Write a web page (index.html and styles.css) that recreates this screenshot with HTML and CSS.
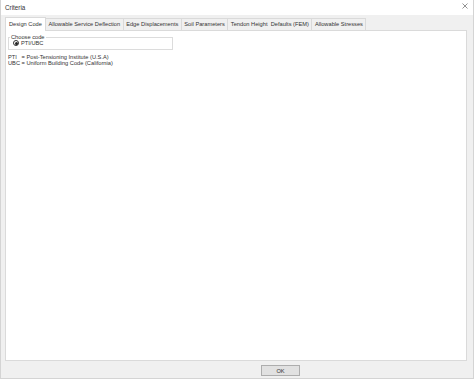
FILE: index.html
```html
<!DOCTYPE html>
<html>
<head>
<meta charset="utf-8">
<link rel="stylesheet" href="styles.css">
</head>
<body>
<div class="window">
  <div class="titlebar">
    <span class="title">Criteria</span>
    <svg class="close" width="6" height="6" viewBox="0 0 6 6"><path d="M0.5 0.5L5.5 5.5M5.5 0.5L0.5 5.5" stroke="#777" stroke-width="0.8"/></svg>
  </div>
  <div class="body">
    <div class="tabs">
      <div class="tab active">Design Code</div>
      <div class="tab">Allowable Service Deflection</div>
      <div class="tab">Edge Displacements</div>
      <div class="tab">Soil Parameters</div>
      <div class="tab">Tendon Height&nbsp; Defaults (FEM)</div>
      <div class="tab">Allowable Stresses</div>
    </div>
    <div class="panel">
      <fieldset class="group">
        <legend>Choose code</legend>
        <label class="radio"><span class="dot"></span>PTI/UBC</label>
      </fieldset>
      <div class="notes">
        <div>PTI&nbsp;&nbsp; = Post-Tensioning Institute (U.S.A)</div>
        <div>UBC = Uniform Building Code (California)</div>
      </div>
    </div>
    <div class="footer">
      <button class="ok">OK</button>
    </div>
  </div>
</div>
</body>
</html>
```
FILE: styles.css
```css
* { box-sizing: border-box; }
html, body { margin: 0; padding: 0; }
body {
  width: 474px;
  height: 379px;
  overflow: hidden;
  font-family: "Liberation Sans", Arial, sans-serif;
  font-size: 5.7px;
  color: #222;
  background: #fff;
}
.window {
  width: 474px;
  height: 379px;
  display: flex;
  flex-direction: column;
  border-left: 1px solid #d4d4d4;
  border-right: 1px solid #d4d4d4;
  border-bottom: 1px solid #d4d4d4;
}
.titlebar {
  height: 15px;
  background: #fff;
  display: flex;
  align-items: center;
  justify-content: space-between;
  padding: 0 5px 1px 4px;
  flex: none;
}
.title { font-size: 6.3px; color: #333; }
.close { margin-top: -2px; }
.body {
  flex: 1;
  background: #f0f0f0;
  display: flex;
  flex-direction: column;
  padding: 2px 6px 0 4px;
}
.tabs {
  display: flex;
  align-items: flex-end;
  height: 13px;
  flex: none;
  position: relative;
  z-index: 1;
}
.tab {
  height: 12px;
  line-height: 11px;
  padding: 0 2.5px;
  border: 1px solid #dadada;
  border-bottom: none;
  border-left: none;
  background: #f0f0f0;
  white-space: nowrap;
  color: #333;
}
.tab.active {
  height: 14px;
  margin-bottom: -1px;
  background: #fff;
  border-left: 1px solid #dadada;
  padding: 0 3px;
  line-height: 12px;
}
.panel {
  height: 331px;
  background: #fff;
  border: 1px solid #dadada;
  padding: 3px 2px 0 2px;
  flex: none;
}
.group {
  margin: 0;
  width: 165px;
  height: 16px;
  border: 1px solid #dcdcdc;
  padding: 0 0 0 4px;
  position: relative;
}
.group legend {
  padding: 0 1px;
  margin-left: -3px;
  font-size: 5.7px;
  line-height: 6px;
  color: #333;
}
.radio {
  display: flex;
  align-items: center;
  gap: 2px;
  color: #333;
}
.dot {
  width: 6px;
  height: 6px;
  border: 1px solid #333;
  border-radius: 50%;
  display: inline-flex;
  align-items: center;
  justify-content: center;
}
.dot::after {
  content: "";
  width: 3px;
  height: 3px;
  border-radius: 50%;
  background: #222;
}
.notes {
  margin-top: 4px;
  line-height: 6px;
  color: #333;
}
.footer {
  flex: 1;
  display: flex;
  align-items: flex-start;
  padding-top: 4px;
}
.ok {
  margin-left: 256px;
  width: 39px;
  height: 11px;
  padding: 0;
  font-family: "Liberation Sans", Arial, sans-serif;
  font-size: 5.7px;
  color: #333;
  background: #e1e1e1;
  border: 1px solid #adadad;
}
```
